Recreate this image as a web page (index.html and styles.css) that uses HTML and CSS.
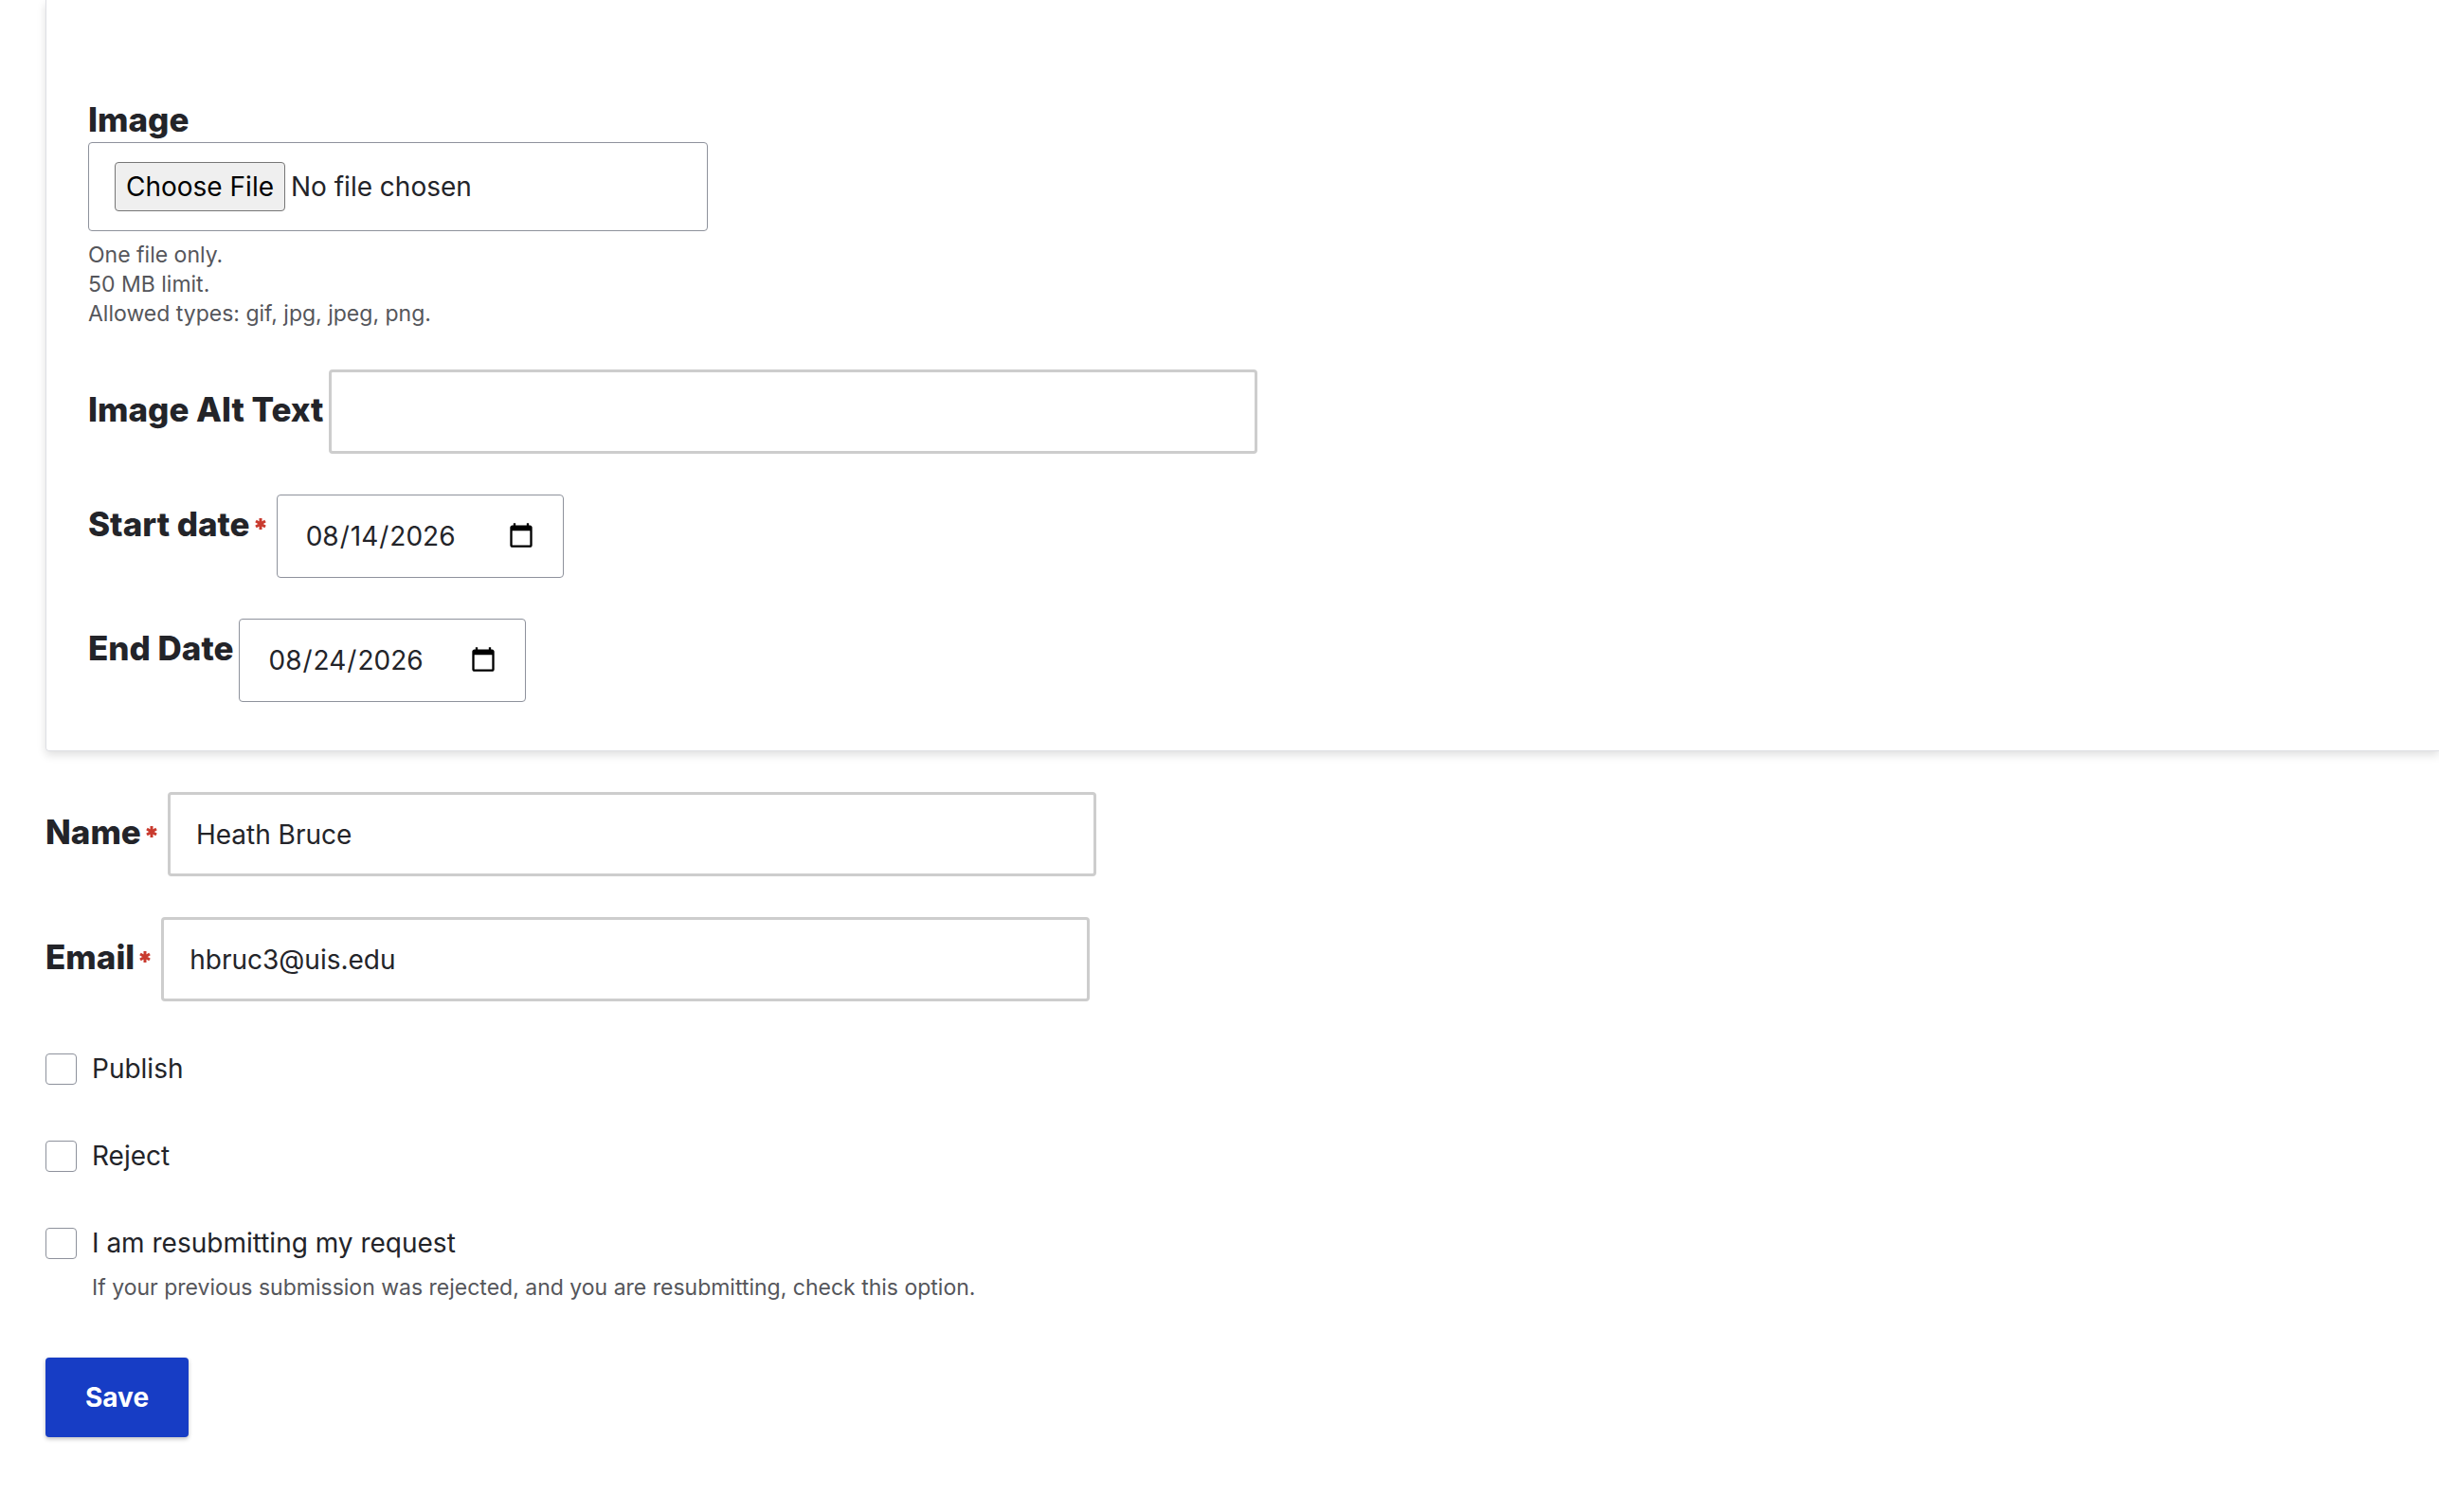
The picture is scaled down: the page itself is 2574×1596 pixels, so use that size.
FILE: index.html
```html
<!DOCTYPE html>
<html lang="en-US">
<head>
<meta charset="utf-8">
<title>Submission form</title>
<link rel="stylesheet" href="styles.css">
</head>
<body>
<form class="form">
  <section class="card">
    <div class="field field-stacked">
      <label class="label" for="image">Image</label>
      <input class="control file-input" type="file" id="image" aria-describedby="image-help">
      <div class="help" id="image-help">One file only.<br>50 MB limit.<br>Allowed types: gif, jpg, jpeg, png.</div>
    </div>
    <div class="field">
      <label class="label" for="alt">Image Alt Text</label>
      <input class="control text-input" type="text" id="alt">
    </div>
    <div class="field field-date">
      <label class="label" for="start">Start date<svg class="required" viewBox="0 0 12 12" aria-hidden="true"><path d="M6 0v12M1 3l10 6M11 3L1 9"/></svg></label>
      <input class="control date-input" type="date" id="start" value="2026-08-14" required>
    </div>
    <div class="field field-date">
      <label class="label" for="end">End Date</label>
      <input class="control date-input" type="date" id="end" value="2026-08-24">
    </div>
  </section>
  <div class="field">
    <label class="label" for="name">Name<svg class="required" viewBox="0 0 12 12" aria-hidden="true"><path d="M6 0v12M1 3l10 6M11 3L1 9"/></svg></label>
    <input class="control text-input" type="text" id="name" value="Heath Bruce" required>
  </div>
  <div class="field">
    <label class="label" for="email">Email<svg class="required" viewBox="0 0 12 12" aria-hidden="true"><path d="M6 0v12M1 3l10 6M11 3L1 9"/></svg></label>
    <input class="control text-input" type="email" id="email" value="hbruc3@uis.edu" required>
  </div>
  <div class="checks">
    <div class="check">
      <input class="checkbox" type="checkbox" id="publish">
      <label for="publish">Publish</label>
    </div>
    <div class="check">
      <input class="checkbox" type="checkbox" id="reject">
      <label for="reject">Reject</label>
    </div>
    <div class="check">
      <input class="checkbox" type="checkbox" id="resubmit" aria-describedby="resubmit-help">
      <label for="resubmit">I am resubmitting my request</label>
      <div class="help check-help" id="resubmit-help">If your previous submission was rejected, and you are resubmitting, check this option.</div>
    </div>
  </div>
  <button class="save" type="submit">Save</button>
</form>
</body>
</html>
```
FILE: styles.css
```css
* {
  box-sizing: border-box;
}

body {
  margin: 0;
  background: #fff;
  color: #232429;
  font-family: Inter, "Liberation Sans", sans-serif;
  font-size: 28px;
  line-height: 44px;
}

.form {
  display: flex;
  flex-direction: column;
  gap: 43px;
  padding: 0 0 48px 48px;
}

.card {
  display: flex;
  flex-direction: column;
  gap: 43px;
  padding: 104px 44px 51px;
  border: solid #dedfe4;
  border-width: 0 0 1px 1px;
  border-radius: 0 0 0 4px;
  box-shadow: 0 4px 10px rgba(0, 0, 0, 0.13);
}

.field {
  display: flex;
  align-items: baseline;
  gap: 6px;
}

.field-stacked {
  flex-direction: column;
  align-items: flex-start;
  gap: 2px;
}

.field-date {
  align-items: flex-start;
}

.field-date .label {
  padding-top: 9px;
}

.label {
  font-size: 35px;
  font-weight: 800;
  white-space: nowrap;
}

.required {
  width: 12px;
  height: 12px;
  margin: 0 5px;
  vertical-align: 7px;
  fill: none;
  stroke: #c93a2e;
  stroke-width: 3;
}

.control {
  margin: 0;
  border: 1px solid #8e929c;
  border-radius: 4px;
  background: #fff;
  color: #232429;
  font: inherit;
}

.text-input {
  width: 980px;
  max-width: 100%;
  height: 89px;
  padding: 0 27px;
  border: 3px solid #cdcdcd;
}

.date-input {
  width: 303px;
  height: 88px;
  padding: 0 29px;
}

.date-input::-webkit-calendar-picker-indicator {
  width: 30px;
  height: 30px;
  margin: 0;
  padding: 0;
}

.file-input {
  width: 654px;
  max-width: 100%;
  height: 94px;
  padding: 20px 27px;
}

.file-input::file-selector-button {
  height: 52px;
  margin: 0 6px 0 0;
  padding: 0 11px;
  border: 1px solid #767676;
  border-radius: 4px;
  background: #efefef;
  color: #000;
  font: inherit;
}

.help {
  color: #55565b;
  font-size: 23px;
  line-height: 31px;
}

.field-stacked .help {
  padding-top: 8px;
}

.checks {
  display: flex;
  flex-direction: column;
  gap: 48px;
  padding-top: 6px;
}

.check {
  display: grid;
  grid-template-columns: 33px 1fr;
  column-gap: 16px;
  align-items: center;
}

.checkbox {
  width: 33px;
  height: 33px;
  margin: 0;
  appearance: none;
  border: 1px solid #8e929c;
  border-radius: 4px;
}

.checkbox:checked {
  background: #173dc5;
}

.check-help {
  grid-column: 2;
  padding-top: 10px;
}

.save {
  align-self: flex-start;
  height: 84px;
  margin-top: 15px;
  padding: 0 42px;
  border: 0;
  border-radius: 4px;
  background: #173dc5;
  box-shadow: 0 2px 4px rgba(0, 0, 0, 0.25);
  color: #fff;
  font: inherit;
  font-weight: 700;
}
```
